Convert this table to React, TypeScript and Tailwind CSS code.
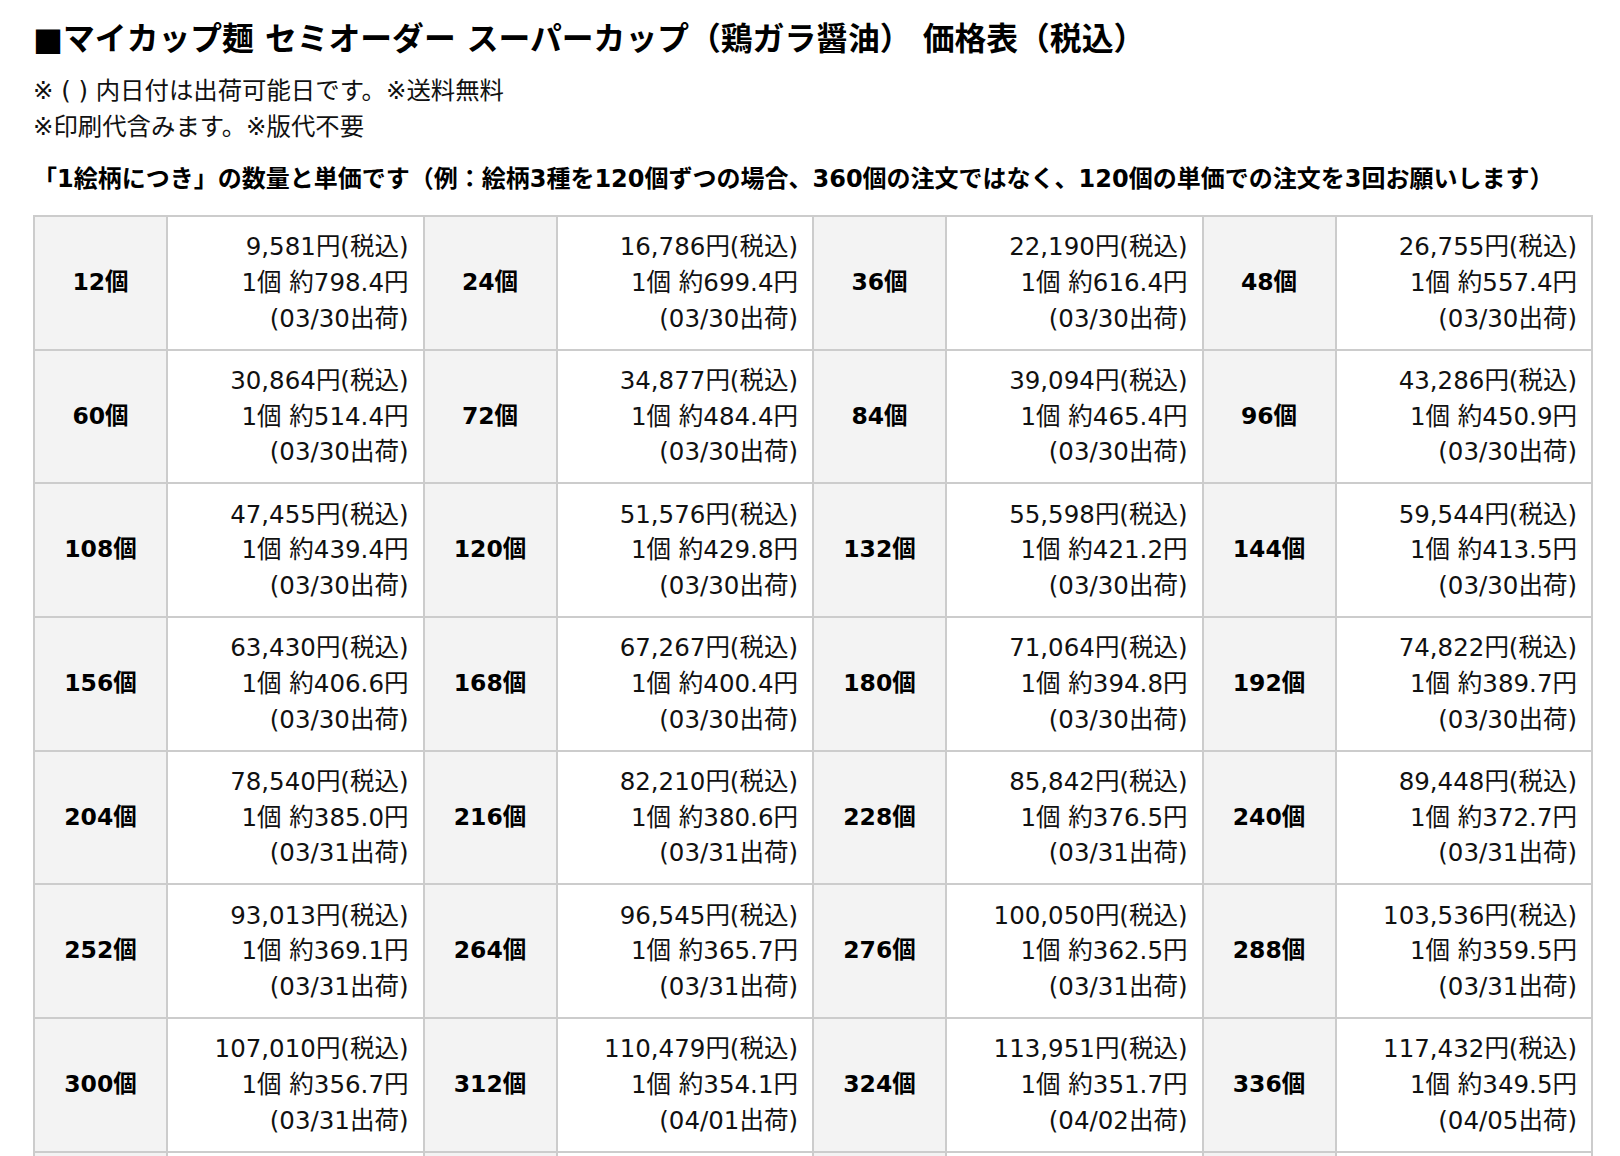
import React from "react";

type Cell = { q: string; total: string; unit: string; date: string };

const rows: Cell[][] = [
  [
    { q: "12", total: "9,581", unit: "798.4", date: "03/30" },
    { q: "24", total: "16,786", unit: "699.4", date: "03/30" },
    { q: "36", total: "22,190", unit: "616.4", date: "03/30" },
    { q: "48", total: "26,755", unit: "557.4", date: "03/30" },
  ],
  [
    { q: "60", total: "30,864", unit: "514.4", date: "03/30" },
    { q: "72", total: "34,877", unit: "484.4", date: "03/30" },
    { q: "84", total: "39,094", unit: "465.4", date: "03/30" },
    { q: "96", total: "43,286", unit: "450.9", date: "03/30" },
  ],
  [
    { q: "108", total: "47,455", unit: "439.4", date: "03/30" },
    { q: "120", total: "51,576", unit: "429.8", date: "03/30" },
    { q: "132", total: "55,598", unit: "421.2", date: "03/30" },
    { q: "144", total: "59,544", unit: "413.5", date: "03/30" },
  ],
  [
    { q: "156", total: "63,430", unit: "406.6", date: "03/30" },
    { q: "168", total: "67,267", unit: "400.4", date: "03/30" },
    { q: "180", total: "71,064", unit: "394.8", date: "03/30" },
    { q: "192", total: "74,822", unit: "389.7", date: "03/30" },
  ],
  [
    { q: "204", total: "78,540", unit: "385.0", date: "03/31" },
    { q: "216", total: "82,210", unit: "380.6", date: "03/31" },
    { q: "228", total: "85,842", unit: "376.5", date: "03/31" },
    { q: "240", total: "89,448", unit: "372.7", date: "03/31" },
  ],
  [
    { q: "252", total: "93,013", unit: "369.1", date: "03/31" },
    { q: "264", total: "96,545", unit: "365.7", date: "03/31" },
    { q: "276", total: "100,050", unit: "362.5", date: "03/31" },
    { q: "288", total: "103,536", unit: "359.5", date: "03/31" },
  ],
  [
    { q: "300", total: "107,010", unit: "356.7", date: "03/31" },
    { q: "312", total: "110,479", unit: "354.1", date: "04/01" },
    { q: "324", total: "113,951", unit: "351.7", date: "04/02" },
    { q: "336", total: "117,432", unit: "349.5", date: "04/05" },
  ],
];

export default function App() {
  return (
    <div
      className="min-h-screen bg-white pl-[33px] pt-[16px] text-[#111]"
      style={{ fontFamily: '"DejaVu Sans", "Noto Sans CJK JP", sans-serif' }}
    >
      <h1 className="text-[31.8px] font-bold leading-[46px] text-black">
        ■マイカップ麺 セミオーダー スーパーカップ（鶏ガラ醤油） 価格表（税込）
      </h1>
      <div className="mt-[11px] text-[24.4px] leading-[36px]">
        <p>※ ( ) 内日付は出荷可能日です。※送料無料</p>
        <p>※印刷代含みます。※版代不要</p>
      </div>
      <p className="mt-[16px] text-[24px] font-bold leading-[36px] text-black">
        「1絵柄につき」の数量と単価です（例：絵柄3種を120個ずつの場合、360個の注文ではなく、120個の単価での注文を3回お願いします）
      </p>
      <table className="mt-[18px] w-[1558px] table-fixed border-collapse text-[24.5px] leading-[35.6px]">
        <colgroup>
          <col className="w-[133px]" />
          <col className="w-[256.5px]" />
          <col className="w-[133px]" />
          <col className="w-[256.5px]" />
          <col className="w-[133px]" />
          <col className="w-[256.5px]" />
          <col className="w-[133px]" />
          <col className="w-[256.5px]" />
        </colgroup>
        <tbody>
          {rows.map((row, i) => (
            <tr key={i}>
              {row.map((c) => (
                <React.Fragment key={c.q}>
                  <th className="border-2 border-[#cccccc] bg-[#f3f3f3] text-center align-middle text-[23.5px] font-bold text-black">
                    {c.q}個
                  </th>
                  <td className="border-2 border-[#cccccc] py-[12.45px] pr-[14px] text-right align-middle">
                    <div>{c.total}円(税込)</div>
                    <div>1個 約{c.unit}円</div>
                    <div>({c.date}出荷)</div>
                  </td>
                </React.Fragment>
              ))}
            </tr>
          ))}
          <tr>
            <th className="h-[40px] border-2 border-[#cccccc] bg-[#f3f3f3]"></th>
            <td className="border-2 border-[#cccccc]"></td>
            <th className="border-2 border-[#cccccc] bg-[#f3f3f3]"></th>
            <td className="border-2 border-[#cccccc]"></td>
            <th className="border-2 border-[#cccccc] bg-[#f3f3f3]"></th>
            <td className="border-2 border-[#cccccc]"></td>
            <th className="border-2 border-[#cccccc] bg-[#f3f3f3]"></th>
            <td className="border-2 border-[#cccccc]"></td>
          </tr>
        </tbody>
      </table>
    </div>
  );
}
